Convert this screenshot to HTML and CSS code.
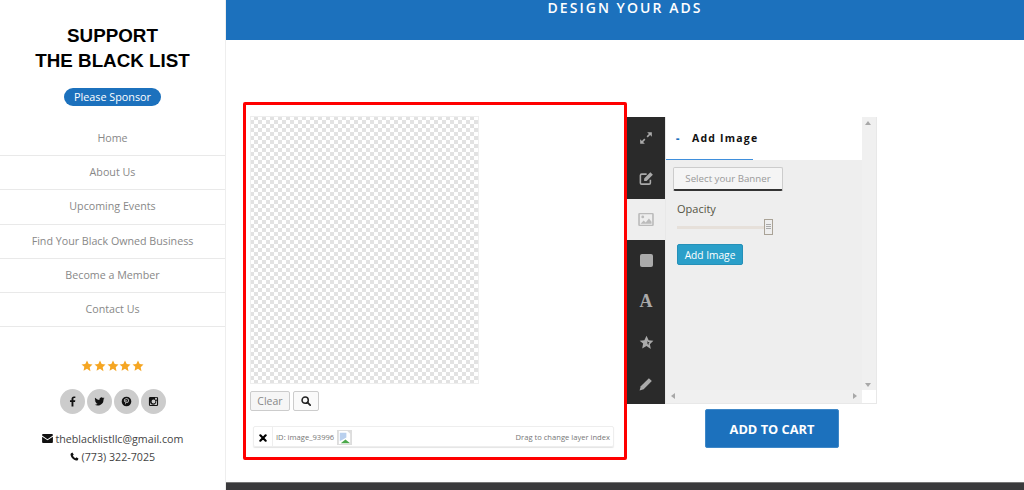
FILE: index.html
```html
<!DOCTYPE html>
<html lang="en">
<head>
  <meta charset="utf-8">
  <title>Design Your Ads</title>
  <link rel="stylesheet" href="styles.css">
</head>
<body>
  <div class="page">
    <aside class="sidebar">
      <h2 class="brand">SUPPORT<br>THE BLACK LIST</h2>
      <a class="sponsor">Please Sponsor</a>
      <ul class="nav">
        <li>Home</li>
        <li>About Us</li>
        <li>Upcoming Events</li>
        <li>Find Your Black Owned Business</li>
        <li>Become a Member</li>
        <li>Contact Us</li>
      </ul>
      <div class="stars">
        <svg viewBox="0 0 24 24"><path d="M12 1l3.4 7.2 7.6 1-5.6 5.4 1.5 7.800L12 17.600l-6.900 3.800 1.500-7.800L1 9.200l7.600-1z"/></svg>
        <svg viewBox="0 0 24 24"><path d="M12 1l3.4 7.2 7.6 1-5.6 5.4 1.5 7.800L12 17.600l-6.900 3.800 1.500-7.800L1 9.200l7.600-1z"/></svg>
        <svg viewBox="0 0 24 24"><path d="M12 1l3.4 7.2 7.6 1-5.6 5.4 1.5 7.800L12 17.600l-6.900 3.800 1.500-7.800L1 9.200l7.600-1z"/></svg>
        <svg viewBox="0 0 24 24"><path d="M12 1l3.4 7.2 7.6 1-5.6 5.4 1.5 7.800L12 17.600l-6.900 3.800 1.500-7.800L1 9.200l7.600-1z"/></svg>
        <svg viewBox="0 0 24 24"><path d="M12 1l3.4 7.2 7.6 1-5.6 5.4 1.5 7.800L12 17.600l-6.900 3.800 1.500-7.800L1 9.200l7.600-1z"/></svg>
      </div>
      <div class="social">
        <a><svg viewBox="0 0 24 24"><path d="M14 23V13h3.500l.6-4H14V6.600c0-1.200.4-2 2-2h2.200V1.100C17.800 1 16.500 1 15.200 1 12 1 9.900 3 9.900 6.200V9H6.500v4h3.400v10z"/></svg></a>
        <a><svg viewBox="0 0 24 24"><path d="M23 5.200c-.8.400-1.700.6-2.600.7.900-.6 1.700-1.500 2-2.500-.9.500-1.900.9-2.900 1.100A4.500 4.500 0 0 0 11.800 8.600C8 8.400 4.700 6.600 2.500 3.800 1.300 5.900 1.900 8.500 3.900 9.800c-.7 0-1.400-.2-2-.6 0 2.200 1.500 4 3.600 4.500-.7.200-1.400.2-2 .1.600 1.800 2.200 3.100 4.200 3.100A9.100 9.100 0 0 1 1 18.800 12.800 12.800 0 0 0 20.700 7.400c.9-.6 1.700-1.300 2.300-2.200z"/></svg></a>
        <a><svg viewBox="0 0 24 24"><path fill-rule="evenodd" d="M12 1.500a10.500 10.500 0 1 0 0 21 10.500 10.500 0 0 0 0-21zm.4 3.500c-4 0-6.100 2.500-6.100 5.100 0 1.300.6 2.600 1.800 3 .3.100.4 0 .5-.3l.2-.7c0-.2 0-.3-.1-.5-.4-.4-.6-1-.6-1.600 0-1.900 1.500-3.500 3.900-3.500 2.100 0 3.300 1.300 3.300 3 0 2.300-1 4.200-2.500 4.200-.8 0-1.400-.7-1.200-1.500.2-1 .7-2.100.7-2.800 0-.6-.4-1.200-1.100-1.200-.9 0-1.600.9-1.600 2.100 0 .8.300 1.300.3 1.300l-1.100 4.600c-.2.800 0 2.100 0 2.500h.1c.2-.3 1.100-1.300 1.400-2.400l.5-2.100c.3.500 1.100 1 2 1 2.600 0 4.400-2.400 4.400-5.500C17.100 7 15.100 5 12.400 5z"/></svg></a>
        <a><svg viewBox="0 0 24 24"><path fill-rule="evenodd" d="M5 2h14a3 3 0 0 1 3 3v14a3 3 0 0 1-3 3H5a3 3 0 0 1-3-3V5a3 3 0 0 1 3-3zm11.500 2c-.5 0-1 .4-1 1v2c0 .5.500 1 1 1h2c.6 0 1-.5 1-1V5c0-.6-.4-1-1-1zM12 7.800a4.200 4.200 0 1 0 0 8.400 4.200 4.200 0 0 0 0-8.400zM4.500 10.500V19c0 .3.200.5.500.5h14c.3 0 .5-.2.500-.5v-8.500h-1.700a6.800 6.800 0 1 1-13.100 0z"/></svg></a>
      </div>
      <div class="contact">
        <p><svg class="ico-mail" viewBox="0 0 24 20"><path d="M2 0h20a2 2 0 0 1 2 2v1.500l-12 8-12-8V2a2 2 0 0 1 2-2zM0 6l12 8 12-8v12a2 2 0 0 1-2 2H2a2 2 0 0 1-2-2z"/></svg> theblacklistllc@gmail.com</p>
        <p><svg class="ico-phone" viewBox="0 0 24 24"><path d="M6.500 1.500L3 3C1.500 4 1 6 1.500 8c1.500 7 7.500 13 14.500 14.500 2 .5 4 0 5-1.500l1.500-3.500-5.500-3.500-2.500 2.500c-3-1.300-5.700-4-7-7L10 7z"/></svg> (773) 322-7025</p>
      </div>
    </aside>

    <main class="main">
      <header class="topbar">DESIGN YOUR ADS</header>
      <section class="workspace">
        <div class="stage">
          <div class="canvas"></div>
          <div class="canvas-btns">
            <button class="btn">Clear</button>
            <button class="btn btn-icon"><svg viewBox="0 0 24 24" width="10" height="10"><circle cx="10" cy="10" r="7.500" fill="none" stroke="#222" stroke-width="3.600"/><path d="M15.500 15.500L22 22" stroke="#222" stroke-width="4.200" stroke-linecap="round"/></svg></button>
          </div>
          <div class="layer">
            <span class="layer-del"><svg viewBox="0 0 24 24" width="8" height="8"><path d="M4 4l16 16M20 4L4 20" stroke="#000" stroke-width="6.500" stroke-linecap="round"/></svg></span>
            <span class="layer-id">ID: image_93996</span>
            <span class="layer-thumb"><svg viewBox="0 0 16 16" width="15" height="15"><rect width="16" height="16" fill="#ddd"/><path d="M2 1h9l3 3v11H2z" fill="#fff"/><path d="M3 3h7v5l-7 4z" fill="#b9d0ee"/><path d="M4 14l5-4 5 4z" fill="#4aa84a"/></svg></span>
            <span class="layer-hint">Drag to change layer index</span>
          </div>
        </div>

        <div class="tool-col">
          <div class="tool">
            <div class="rail">
              <div class="rail-item"><svg viewBox="0 0 24 24" width="14" height="14"><path d="M14 2h8v8l-3-3-4 4-2-2 4-4zM10 22H2v-8l3 3 4-4 2 2-4 4z"/></svg></div>
              <div class="rail-item"><svg viewBox="0 0 24 24" width="16" height="15"><path fill="none" stroke="#aaa" stroke-width="2.500" d="M19 14v5a2 2 0 0 1-2 2H5a2 2 0 0 1-2-2V7a2 2 0 0 1 2-2h8"/><path d="M9 12L19 2l4 4-10 10H9z"/></svg></div>
              <div class="rail-item is-active"><svg viewBox="0 0 24 20" width="16" height="13"><path fill-rule="evenodd" fill="#bbb" d="M2 0h20a2 2 0 0 1 2 2v16a2 2 0 0 1-2 2H2a2 2 0 0 1-2-2V2a2 2 0 0 1 2-2zm.5 2v16h19V2z"/><circle cx="7" cy="6" r="2.200" fill="#bbb"/><path fill="#bbb" d="M3.500 16.500l5-5 3 3 5-6 4 5v3z"/></svg></div>
              <div class="rail-item"><span class="rail-square"></span></div>
              <div class="rail-item rail-letter">A</div>
              <div class="rail-item"><svg viewBox="0 0 24 24" width="15" height="15"><path fill-rule="evenodd" d="M12 1l3.400 7.200 7.600 1-5.600 5.400 1.500 7.800L12 17.600l-6.900 3.800 1.500-7.800L1 9.200l7.600-1zm1.500 8v5.500l2.200 1.200-.5-2.600 1.800-1.700-2.500-.4z"/></svg></div>
              <div class="rail-item"><svg viewBox="0 0 24 24" width="14" height="14"><path d="M17 2l5 5-14 14-7 2 2-7z"/></svg></div>
            </div>
            <div class="panel">
              <div class="panel-view">
                <div class="panel-body">
                  <div class="panel-head"><span class="dash">-</span><span class="head-title">Add Image</span></div>
                  <div class="panel-form">
                    <button class="btn-banner">Select your Banner</button>
                    <label class="field-label">Opacity</label>
                    <div class="slider"><span class="slider-handle"></span></div>
                    <button class="btn-add">Add Image</button>
                  </div>
                </div>
                <div class="vscroll"><i class="arrow arrow-up"></i><i class="arrow arrow-down"></i></div>
              </div>
              <div class="hscroll-row">
                <div class="hscroll"><i class="arrow arrow-left"></i><i class="arrow arrow-right"></i></div>
                <div class="corner"></div>
              </div>
            </div>
          </div>
          <button class="btn-cart">ADD TO CART</button>
        </div>
      </section>
      <footer class="footer"></footer>
    </main>
  </div>
</body>
</html>
```

FILE: styles.css
```css
* { box-sizing: border-box; }
html, body { margin: 0; height: 490px; overflow: hidden; background: #fff; }
body { font-family: "Open Sans", "Noto Sans", sans-serif; font-size: 12px; color: #444; }
button { font-family: inherit; cursor: pointer; }

.page { display: flex; height: 490px; }

/* sidebar */
.sidebar { width: 226px; flex: none; border-right: 1px solid #eee; text-align: center; padding-top: 23px; }
.brand { margin: 0 0 15px; font-family: "Liberation Sans", Arial, sans-serif; font-size: 18.800px; font-weight: bold; line-height: 25px; color: #000; }
.sponsor { display: inline-block; height: 18px; line-height: 17px; width: 97px; border-radius: 9px; background: #1c71bd; color: #fff; font-size: 10.800px; }
.nav { list-style: none; margin: 16px 0 0; padding: 0; }
.nav li { height: 34.2px; line-height: 32px; border-bottom: 1px solid #e9e9e9; color: #888; font-size: 10.700px; }
.stars { display: flex; justify-content: center; gap: .6px; margin-top: 33px; }
.stars svg { width: 12px; height: 12px; fill: #f5a623; }
.social { display: flex; justify-content: center; gap: 2px; margin-top: 17px; }
.social a { width: 25px; height: 25px; border-radius: 50%; background: #ccc; display: flex; align-items: center; justify-content: center; }
.social svg { width: 11px; height: 11px; fill: #111; }
.contact { margin-top: 16px; color: #444; font-size: 10.700px; }
.contact p { margin: 0; line-height: 18px; }
.ico-mail { width: 11px; height: 9px; fill: #111; }
.ico-phone { width: 9px; height: 9px; fill: #111; }

/* main */
.main { flex: 1; display: flex; flex-direction: column; min-width: 0; }
.topbar { height: 40px; flex: none; background: #1c71bd; color: #fff; text-align: center; font-size: 14px; font-weight: 600; letter-spacing: 2.050px; line-height: 15px; }
.workspace { flex: 1; display: flex; align-items: flex-start; padding: 62px 0 0 17px; }
.footer { height: 8px; flex: none; background: #3a3a3c; border-top: 1px solid #777; }

/* stage */
.stage { width: 384px; height: 358px; flex: none; border: 3px solid #f00; border-radius: 2px; padding: 11px 0 0 4px; }
.canvas { width: 229px; height: 268px; background-color: #fff; background-image: conic-gradient(#e2e2e2 25%, #fff 0 50%, #e2e2e2 0 75%, #fff 0); background-size: 8px 8px; box-shadow: inset 0 0 0 1px #eee; }
.canvas-btns { display: flex; gap: 3px; margin-top: 7px; }
.btn { height: 20px; width: 40px; padding: 0; background: #f6f6f6; border: 1px solid #ccc; border-radius: 2px; color: #888; font-size: 10.500px; line-height: 16px; }
.btn-icon { width: 26px; padding: 0; background: #fafafa; display: flex; align-items: center; justify-content: center; }
.layer { display: flex; align-items: flex-end; width: 361px; height: 21px; margin: 15px 0 0 3px; border: 1px solid #eee; border-radius: 2px; box-shadow: 0 1px 1px #e4e4e4; font-size: 7.600px; color: #777; }
.layer-del { width: 19px; height: 19px; flex: none; border-right: 1px solid #eee; display: flex; align-items: center; justify-content: center; padding-top: 3px; }
.layer-id { padding: 0 3px 2px; line-height: 13px; }
.layer-thumb { width: 15px; height: 15px; margin-bottom: 1px; display: flex; }
.layer-hint { margin-left: auto; padding: 0 3px 2px 0; line-height: 13px; }

/* tool */
.tool-col { width: 250px; flex: none; padding-top: 15px; display: flex; flex-direction: column; }
.tool { display: flex; height: 287px; }
.rail { width: 38px; flex: none; background: #2a2a2a; }
.rail-item { height: 41px; display: flex; align-items: center; justify-content: center; fill: #aaa; stroke: none; }
.rail-item.is-active { background: #eee; }
.rail-square { width: 13px; height: 13px; border-radius: 2px; background: #aaa; }
.rail-letter { font-family: "Liberation Serif", serif; font-size: 18px; font-weight: bold; color: #aaa; }
.panel { flex: 1; display: flex; flex-direction: column; background: #eee; border: 1px solid #e8e8e8; border-top: 0; }
.panel-view { flex: 1; display: flex; min-height: 0; }
.panel-body { flex: 1; min-width: 0; }
.panel-head { height: 43px; background: #fff; display: flex; align-items: center; padding: 0 0 1px 10px; position: relative; color: #111; font-size: 10.500px; font-weight: 700; letter-spacing: 1.200px; }
.panel-head::after { content: ""; position: absolute; left: 0; bottom: 0; width: 87px; height: 1px; background: #3f8fdc; }
.dash { width: 16px; color: #1c71bd; font-weight: 800; }
.panel-form { padding: 7px 0 0 7px; }
.btn-banner { display: block; width: 110px; height: 24px; padding: 0; background: #f5f5f5; border: 1px solid #ccc; border-bottom: 2px solid #333; border-radius: 2px; color: #999; font-size: 9.700px; }
.field-label { display: block; margin: 10px 0 0 4px; font-size: 11px; line-height: 16px; color: #554; }
.slider { position: relative; width: 91px; height: 3px; margin: 9px 0 0 4px; background: #e6e0da; }
.slider-handle { position: absolute; right: -5px; top: -7px; width: 9px; height: 16px; background: #eee; border: 1px solid #a9a296; background-image: repeating-linear-gradient(#aaa 0 1px, transparent 1px 2px); background-size: 5px 6px; background-position: center; background-repeat: no-repeat; }
.btn-add { display: block; width: 66px; height: 21px; margin: 15px 0 0 4px; padding: 0; background: #2a9fc9; border: 1px solid #2590b8; border-radius: 2px; color: #fff; font-size: 10.200px; }
.vscroll { width: 14px; flex: none; position: relative; background: #f0f0f0; }
.hscroll-row { height: 13px; flex: none; display: flex; }
.hscroll { flex: 1; position: relative; background: #f0f0f0; }
.corner { width: 14px; background: #fff; }
.arrow { position: absolute; width: 0; height: 0; border: 3px solid transparent; }
.arrow-up { top: 4px; left: 3px; border-bottom: 4px solid #a8a8a8; border-top: 0; }
.arrow-down { bottom: 3px; left: 3px; border-top: 4px solid #a8a8a8; border-bottom: 0; }
.arrow-left { left: 5px; top: 3px; border-right: 4px solid #a8a8a8; border-left: 0; }
.arrow-right { right: 5px; top: 3px; border-left: 4px solid #a8a8a8; border-right: 0; }
.btn-cart { width: 134px; height: 39px; margin: 5px 0 0 78px; background: #1c71bd; border: 1px solid #3f88c8; border-radius: 2px; color: #fff; font-size: 12.800px; font-weight: 700; }
```
